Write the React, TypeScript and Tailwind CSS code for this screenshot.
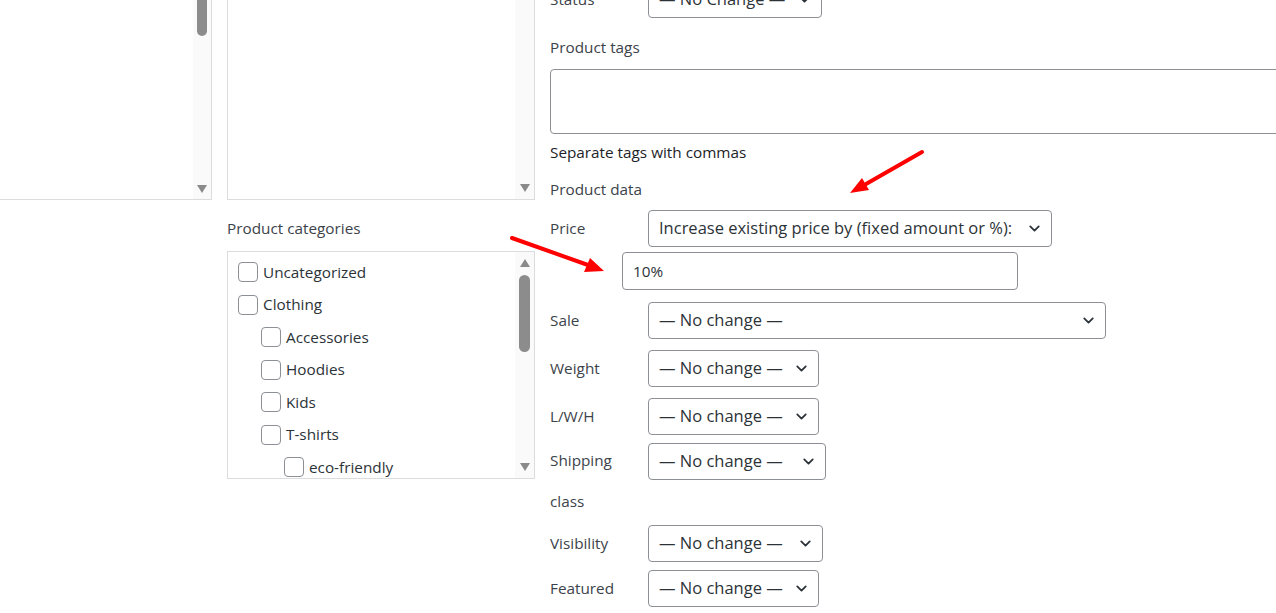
import { ChevronDown } from 'lucide-react';

const font = { fontFamily: '"Open Sans", "Noto Sans", sans-serif' };

function Select({ width, text, mt }: { width: string; text: string; mt?: string }) {
  return (
    <div
      className={`${width} h-[37px] shrink-0 flex items-center justify-between pl-[10px] pr-[8px] border border-[#8c8f94] rounded-[4px] bg-white text-[16.5px] text-[#2c3338] ${mt ?? ''}`}
    >
      <span className="whitespace-nowrap">{text}</span>
      <ChevronDown className="w-[17px] h-[17px] shrink-0 text-[#2c3338]" strokeWidth={2.5} />
    </div>
  );
}

function Row({ label, width, text, mt }: { label: string; width: string; text: string; mt: string }) {
  return (
    <div className={`flex ${mt}`}>
      <div className="w-[98px] shrink-0 leading-[36px] text-[#3c434a]">{label}</div>
      <Select width={width} text={text} />
    </div>
  );
}

function Triangle({ up }: { up?: boolean }) {
  return (
    <svg width="10" height="8" viewBox="0 0 10 8">
      {up ? <polygon points="0,8 10,8 5,0" fill="#8a8a8a" /> : <polygon points="0,0 10,0 5,8" fill="#8a8a8a" />}
    </svg>
  );
}

const categories = [
  { name: 'Uncategorized', level: 0 },
  { name: 'Clothing', level: 0 },
  { name: 'Accessories', level: 1 },
  { name: 'Hoodies', level: 1 },
  { name: 'Kids', level: 1 },
  { name: 'T-shirts', level: 1 },
  { name: 'eco-friendly', level: 2 },
];

export default function App() {
  return (
    <div className="relative w-[1276px] h-[613px] overflow-hidden bg-white text-[15.3px]" style={font}>
      <div className="flex">
        {/* left list box (cut off) */}
        <div className="w-[212px] shrink-0 h-[200px] border-r border-b border-[#dcdcde] flex justify-end">
          <div className="w-[18px] h-full bg-[#fafafa] flex flex-col items-center justify-between pb-[6px]">
            <div className="w-[10px] h-[36px] bg-[#8c8c8c] rounded-b-full" />
            <Triangle />
          </div>
        </div>

        {/* middle column */}
        <div className="ml-[15px] w-[308px] shrink-0">
          <div className="h-[200px] border-x border-b border-[#dcdcde] flex justify-end">
            <div className="w-[19px] h-full bg-[#fafafa] flex flex-col items-center justify-end pb-[7px]">
              <Triangle />
            </div>
          </div>

          <div className="mt-[18px] leading-[20px] text-[#3c434a]">Product categories</div>

          <div className="mt-[13px] h-[228px] border border-[#dcdcde] flex">
            <div className="flex-1 pt-[4px] pl-[10px]">
              {categories.map((c) => (
                <div
                  key={c.name}
                  className={`h-[32.5px] flex items-center gap-[5px] text-[#2c3338] ${
                    c.level === 1 ? 'pl-[23px]' : c.level === 2 ? 'pl-[46px]' : ''
                  }`}
                >
                  <span className="w-[20px] h-[20px] border border-[#8c8f94] rounded-[4px] bg-white shrink-0" />
                  <span>{c.name}</span>
                </div>
              ))}
            </div>
            <div className="w-[19px] h-full bg-[#fafafa] flex flex-col items-center pt-[7px] pb-[7px]">
              <Triangle up />
              <div className="mt-[8px] w-[11px] h-[77px] bg-[#8c8c8c] rounded-full" />
              <div className="flex-1" />
              <Triangle />
            </div>
          </div>
        </div>

        {/* right column */}
        <div className="ml-[15px] w-[780px] shrink-0 -mt-[19px]">
          <Row label="Status" width="w-[174px]" text="— No Change —" mt="" />

          <div className="mt-[19px] leading-[20px] text-[#3c434a]">Product tags</div>
          <div className="mt-[12px] h-[65px] w-[780px] border border-[#8c8f94] rounded-[4px]" />
          <div className="mt-[8px] leading-[20px] text-[#1d2327]">Separate tags with commas</div>
          <div className="mt-[17px] leading-[20px] text-[#3c434a]">Product data</div>

          <Row label="Price" width="w-[404px]" text="Increase existing price by (fixed amount or %):" mt="mt-[11px]" />
          <div className="mt-[5px] ml-[72px] w-[396px] h-[38px] border border-[#8c8f94] rounded-[4px] flex items-center pl-[10px] text-[#2c3338]">
            10%
          </div>

          <Row label="Sale" width="w-[458px]" text="— No change —" mt="mt-[12px]" />
          <Row label="Weight" width="w-[171px]" text="— No change —" mt="mt-[11px]" />
          <Row label="L/W/H" width="w-[171px]" text="— No change —" mt="mt-[11px]" />

          <div className="flex mt-[8px]">
            <div className="w-[98px] shrink-0 leading-[41px] -mt-[3px] text-[#3c434a]">
              Shipping
              <br />
              class
            </div>
            <Select width="w-[178px]" text="— No change —" />
          </div>

          <Row label="Visibility" width="w-[175px]" text="— No change —" mt="mt-[3px]" />
          <Row label="Featured" width="w-[171px]" text="— No change —" mt="mt-[8px]" />
        </div>
      </div>

      {/* red annotation arrows */}
      <svg className="absolute inset-0 pointer-events-none" width="1276" height="613">
        <line x1="922" y1="152" x2="866" y2="184" stroke="#ff0000" strokeWidth="4" strokeLinecap="round" />
        <polygon points="850,193 869,190 862,178" fill="#ff0000" />
        <line x1="512" y1="238" x2="588" y2="265" stroke="#ff0000" strokeWidth="4" strokeLinecap="round" />
        <polygon points="604,271 584,272 590,258" fill="#ff0000" />
      </svg>
    </div>
  );
}
